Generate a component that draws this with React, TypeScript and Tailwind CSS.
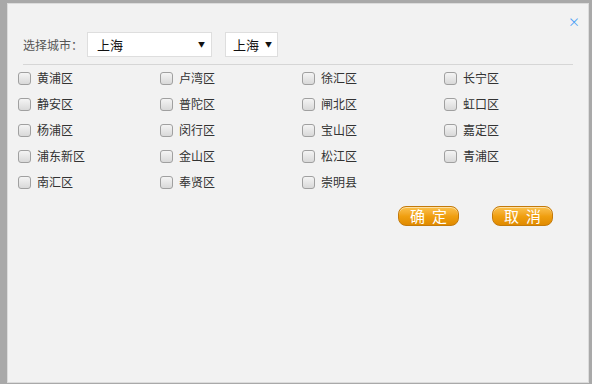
import React from 'react';

const districts = [
  '黄浦区', '卢湾区', '徐汇区', '长宁区',
  '静安区', '普陀区', '闸北区', '虹口区',
  '杨浦区', '闵行区', '宝山区', '嘉定区',
  '浦东新区', '金山区', '松江区', '青浦区',
  '南汇区', '奉贤区', '崇明县',
];

const font = { fontFamily: '"Noto Sans CJK SC", "Liberation Sans", sans-serif' };

const OrangeButton: React.FC<{ label: string }> = ({ label }) => (
  <button className="w-[61px] h-[20px] rounded-[8px] border border-[#c47a0a] bg-gradient-to-b from-[#fbc24a] via-[#f0a010] to-[#e08a00] text-white text-[15px] leading-[18px] tracking-[7px] pl-[7px] shadow-[inset_0_1px_0_rgba(255,255,255,0.5)]">
    {label}
  </button>
);

const App: React.FC = () => {
  return (
    <div className="w-[592px] h-[384px] bg-[#a9a9a9] overflow-hidden pl-[7px] pt-[3px]" style={font}>
      {/* dialog */}
      <div className="relative w-[582px] h-[380px] bg-[#f2f2f2] border border-[#dcdcdc]">
        <button className="absolute left-[560px] top-[12px] text-[12px] leading-none text-[#4a9ef5]">×</button>

        {/* city pickers */}
        <div className="flex items-center h-[25px] mt-[28px] pl-[15px]">
          <span className="text-[12px] text-[#555] w-[64px]">选择城市：</span>
          <div className="w-[125px] h-[25px] bg-white border border-[#dedede] flex items-center justify-between pl-[9px] pr-[6px] text-[13px] text-[#111]">
            <span>上海</span>
            <span className="text-[7px]">▼</span>
          </div>
          <div className="ml-[13px] w-[53px] h-[25px] bg-white border border-[#dedede] flex items-center justify-between pl-[7px] pr-[5px] text-[13px] text-[#111]">
            <span>上海</span>
            <span className="text-[7px]">▼</span>
          </div>
        </div>

        <div className="ml-[15px] mt-[7px] w-[550px] h-px bg-[#d6d6d6]" />

        {/* districts */}
        <div className="grid grid-cols-[142px_142px_142px_142px] pl-[10px]">
          {districts.map((d) => (
            <label key={d} className="flex items-center h-[26px] gap-[6px] text-[12px] text-[#333]">
              <span className="w-[13px] h-[13px] rounded-[3px] border border-[#a0a0a0] bg-gradient-to-b from-[#f4f4f4] to-[#d9d9d9]" />
              {d}
            </label>
          ))}
        </div>

        {/* actions */}
        <div className="flex mt-[11px] pl-[390px] gap-[33px]">
          <OrangeButton label="确定" />
          <OrangeButton label="取消" />
        </div>
      </div>
    </div>
  );
};

export default App;
